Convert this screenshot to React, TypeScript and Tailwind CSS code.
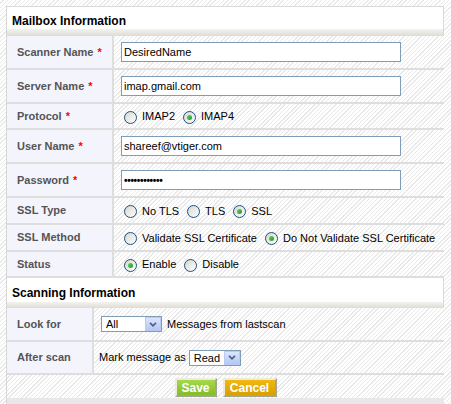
import React from "react";

function Radio({ checked }: { checked?: boolean }) {
  return (
    <span className="relative inline-flex h-[13px] w-[13px] shrink-0 translate-y-[1px] items-center justify-center rounded-full border border-[#1c5180] bg-gradient-to-br from-[#d6d6d0] to-white">
      {checked && <span className="h-[5px] w-[5px] rounded-full bg-gradient-to-br from-[#5fd35a] to-[#1e9a1e]" />}
    </span>
  );
}

function RadioOpt({ label, checked, last }: { label: string; checked?: boolean; last?: boolean }) {
  return (
    <span className={`flex items-center ${last ? "" : "mr-[8px]"}`}>
      <Radio checked={checked} />
      <span className="ml-[5px] text-[11px] leading-[14px] text-black">{label}</span>
    </span>
  );
}

function Select({ value, w }: { value: string; w: string }) {
  return (
    <div className={`flex h-[16px] ${w} shrink-0 items-stretch border border-[#7f9db9] bg-white`}>
      <div className="flex-1 pl-[4px] text-[11px] leading-[14px] text-black">{value}</div>
      <div className="flex w-[16px] items-center justify-center border border-[#b7caf3] bg-gradient-to-b from-[#dbe5fd] to-[#b4c7f4]">
        <svg width="8" height="5" viewBox="0 0 8 5">
          <path d="M1 0.8 L4 3.8 L7 0.8" stroke="#4d6185" strokeWidth="1.7" fill="none" />
        </svg>
      </div>
    </div>
  );
}

function Input({ value, password }: { value: string; password?: boolean }) {
  return (
    <div className="flex h-[20px] w-[280px] items-center border border-[#7f9db9] bg-white pl-[2px] text-[11px] text-black">
      {password ? <span className="text-[10px] font-bold tracking-[-0.3px]">{value}</span> : value}
    </div>
  );
}

function Row({
  label,
  req,
  h,
  lw,
  pl,
  children,
}: {
  label: string;
  req?: boolean;
  h: string;
  lw: string;
  pl: string;
  children: React.ReactNode;
}) {
  return (
    <div className={`flex ${h} border-b-2 border-[#dedede]`}>
      <div className={`flex ${lw} shrink-0 items-center border-r-2 border-[#dedede] bg-[#f4f4fd] pl-[10px] text-[11px] font-bold text-[#555]`}>
        {label}
        {req && <span className="ml-[4px] text-[#ff0000]">*</span>}
      </div>
      <div className={`flex flex-1 items-center ${pl}`}>{children}</div>
    </div>
  );
}

export default function App() {
  return (
    <div className="h-[404px] w-[451px] overflow-hidden bg-[image:repeating-linear-gradient(135deg,#ffffff_0px,#ffffff_2px,#e9e9e9_2px,#e9e9e9_3px)] pl-[6px] pt-[6px] font-['Liberation_Sans',Arial,sans-serif]">
      <div className="w-[438px] border-l border-[#d6d6d6]">
        {/* Mailbox header */}
        <div className="border-r border-t border-[#dadada] bg-white">
          <div className="h-[22px] pl-[5px] pt-[7px] text-[12px] font-bold leading-[14px] text-black">Mailbox Information</div>
          <div className="h-[7px] bg-gradient-to-b from-[#f3f3ef] to-[#dedcd4]" />
        </div>

        <Row label="Scanner Name" req h="h-[34px]" lw="w-[107px]" pl="pl-[7px]">
          <Input value="DesiredName" />
        </Row>
        <Row label="Server Name" req h="h-[34px]" lw="w-[107px]" pl="pl-[7px]">
          <Input value="imap.gmail.com" />
        </Row>
        <Row label="Protocol" req h="h-[26px]" lw="w-[107px]" pl="pl-[10px]">
          <RadioOpt label="IMAP2" />
          <RadioOpt label="IMAP4" checked last />
        </Row>
        <Row label="User Name" req h="h-[34px]" lw="w-[107px]" pl="pl-[7px]">
          <Input value="shareef@vtiger.com" />
        </Row>
        <Row label="Password" req h="h-[34px]" lw="w-[107px]" pl="pl-[7px]">
          <Input value="••••••••••••" password />
        </Row>
        <Row label="SSL Type" h="h-[27px]" lw="w-[107px]" pl="pl-[10px]">
          <RadioOpt label="No TLS" />
          <RadioOpt label="TLS" />
          <RadioOpt label="SSL" checked last />
        </Row>
        <Row label="SSL Method" h="h-[27px]" lw="w-[107px]" pl="pl-[10px]">
          <RadioOpt label="Validate SSL Certificate" />
          <RadioOpt label="Do Not Validate SSL Certificate" checked last />
        </Row>
        <Row label="Status" h="h-[26px]" lw="w-[107px]" pl="pl-[10px]">
          <RadioOpt label="Enable" checked />
          <RadioOpt label="Disable" last />
        </Row>

        {/* Scanning header */}
        <div className="border-r border-[#dadada] bg-white">
          <div className="h-[24px] pl-[5px] pt-[8px] text-[12px] font-bold leading-[14px] text-black">Scanning Information</div>
          <div className="h-[6px] bg-gradient-to-b from-[#f3f3ef] to-[#dedcd4]" />
        </div>

        <Row label="Look for" h="h-[34px]" lw="w-[87px]" pl="pl-[7px]">
          <Select value="All" w="w-[61px]" />
          <span className="ml-[5px] text-[11px] text-black">Messages from lastscan</span>
        </Row>
        <Row label="After scan" h="h-[33px]" lw="w-[87px]" pl="pl-[5px]">
          <span className="mr-[3px] text-[11px] text-black">Mark message as</span>
          <Select value="Read" w="w-[52px]" />
        </Row>

        <div className="flex h-[23px] justify-center gap-[6px] pt-[3px]">
          <div className="flex h-[19px] w-[42px] items-center justify-center border-2 border-b-[#a3a396] border-l-[#eeebdc] border-r-[#a3a396] border-t-[#eeebdc] bg-gradient-to-b from-[#a6d84c] to-[#84bd22] text-[12px] font-bold text-white">
            Save
          </div>
          <div className="flex h-[19px] w-[54px] items-center justify-center border-2 border-b-[#a3a396] border-l-[#eeebdc] border-r-[#a3a396] border-t-[#eeebdc] bg-gradient-to-b from-[#f0b90f] to-[#d9a000] text-[12px] font-bold text-white">
            Cancel
          </div>
        </div>
        <div className="h-[6px] bg-[#e8e8e8]" />
      </div>
    </div>
  );
}
